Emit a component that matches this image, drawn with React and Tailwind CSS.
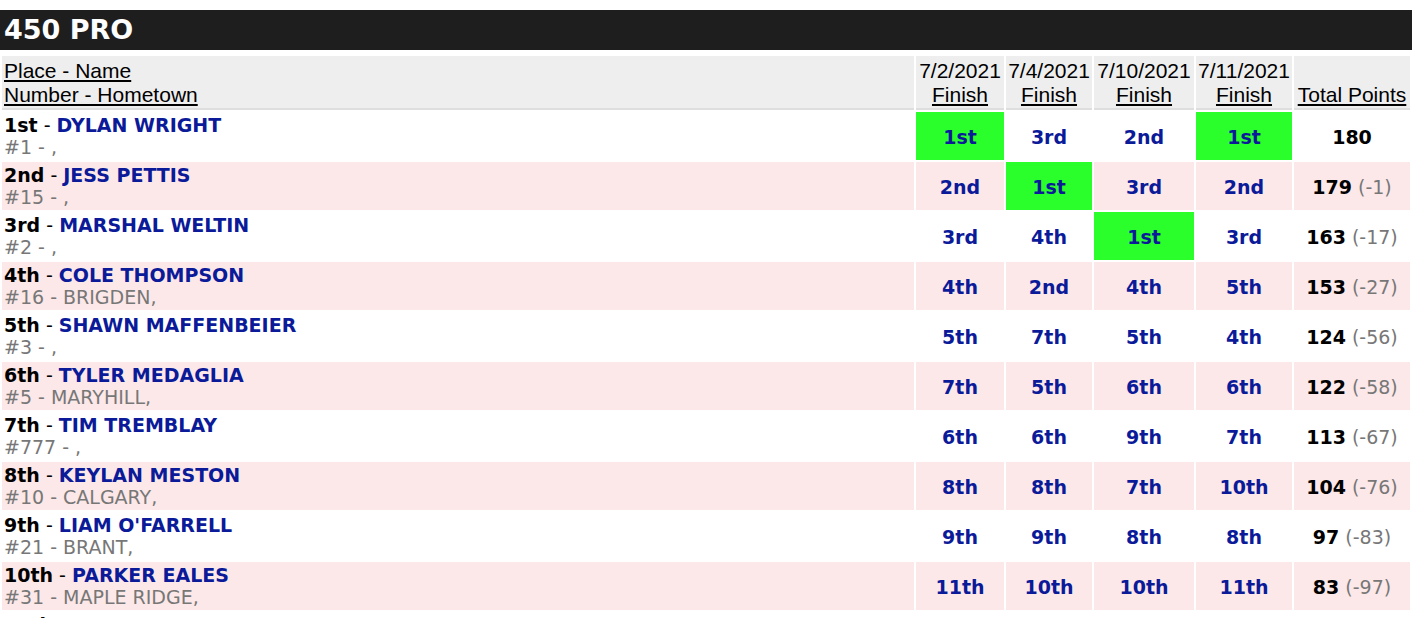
const races = [
  { date: "7/2/2021", w: "w-[88px]" },
  { date: "7/4/2021", w: "w-[86px]" },
  { date: "7/10/2021", w: "w-[100px]" },
  { date: "7/11/2021", w: "w-[96px]" },
];

const riders = [
  { place: "1st", name: "DYLAN WRIGHT", num: "#1 - ,", finishes: ["1st", "3rd", "2nd", "1st"], total: "180", diff: "" },
  { place: "2nd", name: "JESS PETTIS", num: "#15 - ,", finishes: ["2nd", "1st", "3rd", "2nd"], total: "179", diff: "(-1)" },
  { place: "3rd", name: "MARSHAL WELTIN", num: "#2 - ,", finishes: ["3rd", "4th", "1st", "3rd"], total: "163", diff: "(-17)" },
  { place: "4th", name: "COLE THOMPSON", num: "#16 - BRIGDEN,", finishes: ["4th", "2nd", "4th", "5th"], total: "153", diff: "(-27)" },
  { place: "5th", name: "SHAWN MAFFENBEIER", num: "#3 - ,", finishes: ["5th", "7th", "5th", "4th"], total: "124", diff: "(-56)" },
  { place: "6th", name: "TYLER MEDAGLIA", num: "#5 - MARYHILL,", finishes: ["7th", "5th", "6th", "6th"], total: "122", diff: "(-58)" },
  { place: "7th", name: "TIM TREMBLAY", num: "#777 - ,", finishes: ["6th", "6th", "9th", "7th"], total: "113", diff: "(-67)" },
  { place: "8th", name: "KEYLAN MESTON", num: "#10 - CALGARY,", finishes: ["8th", "8th", "7th", "10th"], total: "104", diff: "(-76)" },
  { place: "9th", name: "LIAM O'FARRELL", num: "#21 - BRANT,", finishes: ["9th", "9th", "8th", "8th"], total: "97", diff: "(-83)" },
  { place: "10th", name: "PARKER EALES", num: "#31 - MAPLE RIDGE,", finishes: ["11th", "10th", "10th", "11th"], total: "83", diff: "(-97)" },
  { place: "11th", name: "JACOB PIETTE", num: "#45 - ,", finishes: ["10th", "11th", "11th", "9th"], total: "77", diff: "(-103)" },
];

const verdana = "font-['Verdana','DejaVu_Sans',sans-serif]";
const arial = "font-['Liberation_Sans',Arial,sans-serif]";

export default function App() {
  return (
    <div className="bg-white min-h-screen pt-[10px] text-black">
      <div className={`bg-[#1e1e1e] h-[40px] flex items-center px-[4px] text-white text-[27px] font-bold ${verdana}`}>
        450 PRO
      </div>
      <table className="mt-[4px] w-full table-fixed border-separate border-spacing-[2px]">
        <thead>
          <tr className={`${arial} text-[21px] leading-[24px]`}>
            <th className="bg-[#eeeeee] border-b-2 border-[#dedede] text-left font-normal px-[2px] pt-[3px] pb-[1px] align-bottom">
              <div className="underline">Place - Name</div>
              <div className="underline">Number - Hometown</div>
            </th>
            {races.map((r) => (
              <th key={r.date} className={`${r.w} bg-[#eeeeee] border-b-2 border-[#dedede] font-normal px-0 pt-[3px] pb-[1px] align-bottom whitespace-nowrap`}>
                <div>{r.date}</div>
                <div className="underline">Finish</div>
              </th>
            ))}
            <th className="w-[116px] bg-[#eeeeee] border-b-2 border-[#dedede] font-normal px-0 pt-[3px] pb-[1px] align-bottom whitespace-nowrap">
              <div className="underline">Total Points</div>
            </th>
          </tr>
        </thead>
        <tbody className={`${verdana} text-[19px]`}>
          {riders.map((r, i) => {
            const bg = i % 2 === 1 ? "bg-[#fce8e8]" : "bg-white";
            return (
              <tr key={r.place}>
                <td className={`${bg} px-[2px] pt-[2px] pb-[2px] leading-[22px] h-[48px] whitespace-nowrap`}>
                  <div>
                    <span className="font-bold">{r.place}</span> - <span className="font-bold text-[#0b1a99]">{r.name}</span>
                  </div>
                  <div className="text-[#777777]">{r.num}</div>
                </td>
                {r.finishes.map((f, j) => (
                  <td
                    key={j}
                    className={`${f === "1st" ? "bg-[#2bff2b]" : bg} text-center font-bold text-[#0b1a99] h-[48px] pt-[2px]`}
                  >
                    {f}
                  </td>
                ))}
                <td className={`${bg} text-center h-[48px] pt-[2px] whitespace-nowrap`}>
                  <span className="font-bold">{r.total}</span>
                  {r.diff && <span className="text-[#777777]"> {r.diff}</span>}
                </td>
              </tr>
            );
          })}
        </tbody>
      </table>
    </div>
  );
}
